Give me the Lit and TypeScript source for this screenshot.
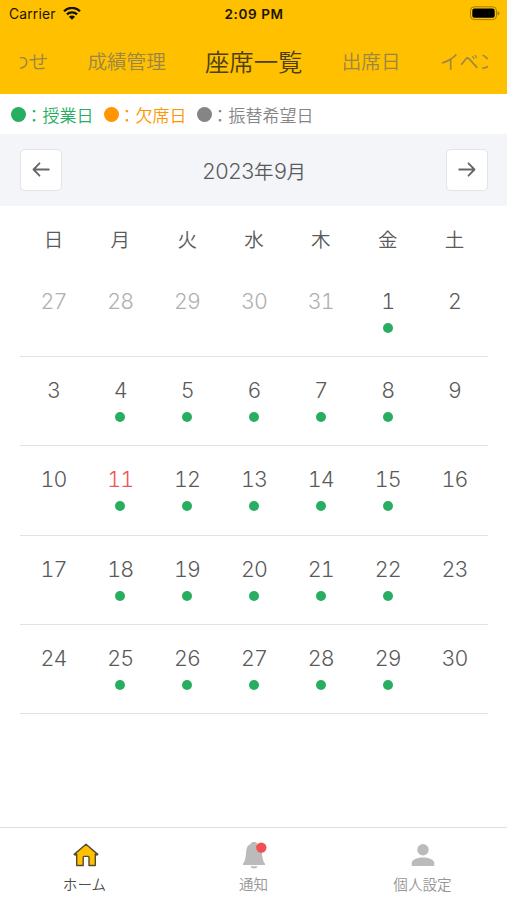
import { LitElement, html, css, svg } from "lit";
import { customElement } from "lit/decorators.js";
import { classMap } from "lit/directives/class-map.js";

interface Day { n: number; dim?: boolean; today?: boolean; dot?: boolean }

const weekdays = ["日", "月", "火", "水", "木", "金", "土"];

const weeks: Day[][] = [
  [27, 28, 29, 30, 31, 1, 2].map((n) => ({ n, dim: n > 20, dot: n === 1 })),
  ...[3, 10, 17, 24].map((start) =>
    weekdays.map((_, i) => ({ n: start + i, today: start + i === 11, dot: i > 0 && i < 6 }))
  ),
];

@customElement("app-root")
export class AppRoot extends LitElement {
  static styles = css`
    :host {
      display: flex; flex-direction: column; width: 507px; height: 900px;
      background: #fff; color: #5a5a5a; overflow: hidden; box-sizing: border-box;
      font-family: Inter, "Noto Sans CJK JP", sans-serif; font-weight: 350;
    }
    svg { display: block; }
    .header { background: #ffc000; height: 94px; flex: none; }
    .status {
      height: 28px; display: grid; grid-template-columns: 1fr auto 1fr; align-items: center;
      padding: 0 7px 0 9px; color: #1a1400; font-family: Inter, sans-serif; font-size: 13.8px; font-weight: 400;
    }
    .carrier { display: flex; align-items: center; gap: 7px; letter-spacing: 0.2px; }
    .time { font-weight: 600; font-size: 13.5px; letter-spacing: 0.6px; margin-right: 1px; }
    .battery { justify-self: end; }
    .tabs {
      height: 66px; margin: 0 19px 0 20px; overflow: hidden; display: flex; align-items: center;
      gap: 39.2px; white-space: nowrap; color: #9b8548; font-size: 19.6px;
      font-family: "Noto Sans CJK JP", sans-serif;
    }
    .tab { flex: none; line-height: 64px; }
    .tab:first-child { margin-left: -11px; }
    .tab.on { font-size: 24.4px; color: #4b3f18; }
    .legend {
      height: 40px; flex: none; display: flex; align-items: center; padding: 2px 0 0 9.5px; box-sizing: border-box;
      font-family: "Noto Sans CJK JP", sans-serif; font-size: 17px; gap: 9px;
    }
    .key { display: flex; align-items: center; white-space: nowrap; line-height: 24px; }
    .key::before { content: ""; width: 15px; height: 15px; border-radius: 50%; background: currentColor; margin: -2px 0 0 1px; }
    .green { color: #27ae60; }
    .orange { color: #ff9500; }
    .gray { color: #858585; }
    .month {
      height: 72px; flex: none; background: #f3f5f9; display: flex; align-items: center;
      justify-content: space-between; padding: 0 19px 0 20px; font-size: 21.5px;
    }
    .title { padding-top: 3px; line-height: 30px; letter-spacing: -0.9px; font-variant-numeric: tabular-nums; }
    .title .ja { font-size: 19.5px; letter-spacing: 0; }
    .btn {
      width: 42px; height: 42px; box-sizing: border-box; border: 1px solid #e2e4ea; border-radius: 5px;
      background: #fff; display: flex; align-items: center; justify-content: center;
    }
    .row { display: grid; grid-template-columns: repeat(7, 1fr); margin: 0 19px 0 20px; text-align: center; flex: none; }
    .names { height: 62px; font-size: 19.5px; line-height: 66px; font-family: "Noto Sans CJK JP", sans-serif; }
    .week { height: 89.2px; box-sizing: border-box; border-bottom: 1.5px solid #e2e2e2; font-size: 21.5px; }
    .day {
      display: flex; flex-direction: column; align-items: center; padding-top: 20px;
      font-weight: 300; letter-spacing: -0.9px; line-height: 26px; font-variant-numeric: tabular-nums;
    }
    .dim { color: #b0b0b0; }
    .today { color: #ef5558; }
    .dot { width: 10px; height: 10px; border-radius: 50%; background: #27ae60; margin-top: 9px; }
    .nav {
      margin-top: auto; height: 73px; flex: none; box-sizing: border-box; border-top: 1px solid #dedede;
      display: grid; grid-template-columns: repeat(3, 1fr);
      font-family: "Noto Sans CJK JP", sans-serif; font-size: 14.6px; color: #969696;
    }
    .item { display: flex; flex-direction: column; align-items: center; padding-top: 13px; line-height: 22px; gap: 2px; }
    .item.on { color: #4c4c4c; }
  `;

  private arrow(right: boolean) {
    return html`<svg width="18" height="16" viewBox="0 0 18 16" fill="none" stroke="#666" stroke-width="1.8"
      stroke-linecap="round" stroke-linejoin="round">
      ${right ? svg`<path d="M1.2 7.5H16.5M10.5 1.3L16.5 7.5L10.5 13.7"/>` : svg`<path d="M16.8 7.5H1.5M7.5 1.3L1.5 7.5L7.5 13.7"/>`}
    </svg>`;
  }

  render() {
    return html`
      <div class="header">
        <div class="status">
          <div class="carrier">Carrier
            <svg width="18" height="14" viewBox="0 0 18 14" fill="none" stroke="#111" stroke-width="2.3">
              <path d="M1 4.2C5.5-.2 12.5-.2 17 4.2M3.9 7.4C6.8 4.6 11.2 4.6 14.1 7.4"/>
              <path d="M9 12.8L5.9 9.7C7.6 8.1 10.4 8.1 12.1 9.7Z" fill="#111" stroke="none"/>
            </svg>
          </div>
          <div class="time">2:09 PM</div>
          <svg class="battery" width="31" height="16" viewBox="0 0 31 16">
            <rect x="1.5" y=".8" width="26" height="12.8" rx="3.8" fill="none" stroke="#a47d08" stroke-width="1"/>
            <rect x="3.3" y="2.6" width="22.4" height="9.2" rx="2.2" fill="#000"/>
            <path d="M28.6 4.9Q30.4 5.5 30.4 7.2Q30.4 8.9 28.6 9.5Z" fill="#a47d08"/>
          </svg>
        </div>
        <div class="tabs">
          ${["わせ", "成績管理", "座席一覧", "出席日", "イベン"].map(
            (t, i) => html`<span class=${classMap({ tab: true, on: i === 2 })}>${t}</span>`
          )}
        </div>
      </div>
      <div class="legend">
        <span class="key green">：授業日</span>
        <span class="key orange">：欠席日</span>
        <span class="key gray">：振替希望日</span>
      </div>
      <div class="month">
        <div class="btn">${this.arrow(false)}</div>
        <div class="title">2023<span class="ja">年</span>9<span class="ja">月</span></div>
        <div class="btn">${this.arrow(true)}</div>
      </div>
      <div class="row names">${weekdays.map((w) => html`<span>${w}</span>`)}</div>
      ${weeks.map((week) => html`<div class="row week">${week.map(
        (d) => html`<div class=${classMap({ day: true, dim: !!d.dim, today: !!d.today })}>
          ${d.n}${d.dot ? html`<span class="dot"></span>` : ""}</div>`
      )}</div>`)}
      <div class="nav">
        <div class="item on">
          <svg width="28" height="30" viewBox="0 0 28 30">
            <path d="M15 3.3L26.8 13.4L26 14L24.3 13.2V24.5H18V16.2Q18 15.4 17.2 15.4H13Q12.2 15.4 12.2 16.2V24.5H5.7V13.2L4 14L3.2 13.4Z" fill="#ffc000" stroke="#554b35" stroke-width="1.4" stroke-linejoin="round"/>
          </svg>
          ホーム
        </div>
        <div class="item">
          <svg width="28" height="30" viewBox="0 0 28 30">
            <path d="M14 1C15.8 1 17 1.6 17.2 2.9C20.3 3.9 21.5 6.5 21.8 10C22.2 17.5 23.2 20.5 25 22.7V24H3V22.7C4.8 20.5 5.8 17.5 6.2 10C6.5 6.5 7.7 3.9 10.8 2.9C11 1.6 12.2 1 14 1ZM10.5 25.2H17.5C16.8 28.2 11.2 28.2 10.5 25.2Z" fill="#bbb"/>
            <circle cx="21.3" cy="6.6" r="5.2" fill="#f05252"/>
          </svg>
          通知
        </div>
        <div class="item">
          <svg width="28" height="30" viewBox="0 0 28 30">
            <circle cx="14" cy="8.7" r="5.7" fill="#bbb"/>
            <path d="M2.8 25V21.5C4.5 14.8 23.5 14.8 25.2 21.5V25Z" fill="#bbb"/>
          </svg>
          個人設定
        </div>
      </div>
    `;
  }
}
